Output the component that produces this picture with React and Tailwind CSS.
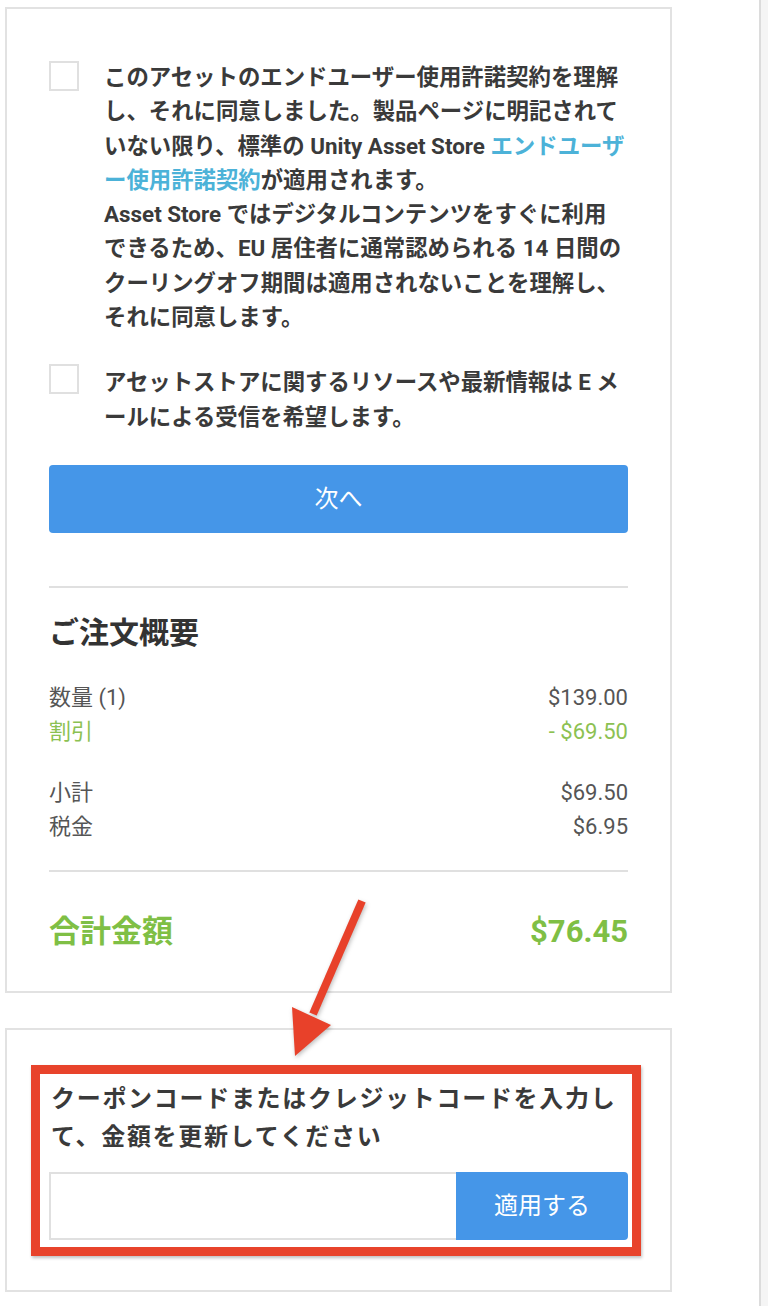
import React from 'react';

const font = { fontFamily: 'Roboto, "Noto Sans CJK JP", sans-serif' };

const Checkbox = () => (
  <div className="w-[30px] h-[30px] shrink-0 border-2 border-[#e0e0e0] bg-white mt-[1px]" />
);

const SummaryRow = ({ label, value, green }) => (
  <div
    className={`flex justify-between text-[22px] leading-[34px] ${
      green ? 'text-[#8cc152]' : 'text-[#555555]'
    }`}
  >
    <span>{label}</span>
    <span>{value}</span>
  </div>
);

const Arrow = () => (
  <svg
    className="absolute top-0 left-0 pointer-events-none"
    width="768"
    height="1306"
    viewBox="0 0 768 1306"
    style={{ filter: 'drop-shadow(1px 2px 2px rgba(0,0,0,0.25))' }}
  >
    <line x1="362" y1="901" x2="313" y2="1014" stroke="#e8412a" strokeWidth="8" />
    <polygon points="292,1007 331,1025 295,1056" fill="#e8412a" />
  </svg>
);

export default function App() {
  return (
    <div className="relative flex h-[1306px] overflow-hidden bg-white text-[#3a3a3a]" style={font}>
      {/* main column */}
      <div className="w-[759px] shrink-0 pt-[7px] pl-[5px]">
        {/* checkout card */}
        <div className="w-[667px] border-2 border-[#e2e2e2] bg-white px-[42px] pt-[51px] pb-[39px]">
          <div className="flex gap-[25px]">
            <Checkbox />
            <p className="text-[22.4px] leading-[34.3px] font-bold whitespace-nowrap">
              このアセットのエンドユーザー使用許諾契約を理解
              <br />
              し、それに同意しました。製品ページに明記されて
              <br />
              いない限り、標準の Unity Asset Store{' '}
              <span className="text-[#4cb2d8]">エンドユーザ</span>
              <br />
              <span className="text-[#4cb2d8]">ー使用許諾契約</span>が適用されます。
              <br />
              Asset Store ではデジタルコンテンツをすぐに利用
              <br />
              できるため、EU 居住者に通常認められる 14 日間の
              <br />
              クーリングオフ期間は適用されないことを理解し、
              <br />
              それに同意します。
            </p>
          </div>

          <div className="flex gap-[25px] mt-[31px]">
            <div className="-mt-[2px]">
              <Checkbox />
            </div>
            <p className="text-[22.4px] leading-[34.3px] font-bold whitespace-nowrap">
              アセットストアに関するリソースや最新情報は E メ
              <br />
              ールによる受信を希望します。
            </p>
          </div>

          <button className="mt-[31px] w-full h-[68px] rounded-[4px] bg-[#4596e8] text-white text-[24px] font-normal">
            次へ
          </button>

          <div className="mt-[53px] h-[2px] bg-[#e0e0e0]" />

          <h2 className="mt-[25px] text-[30px] leading-[40px] font-bold text-[#333333]">ご注文概要</h2>

          <div className="mt-[28px]">
            <SummaryRow label="数量 (1)" value="$139.00" />
            <SummaryRow label="割引" value="- $69.50" green />
          </div>
          <div className="mt-[27px]">
            <SummaryRow label="小計" value="$69.50" />
            <SummaryRow label="税金" value="$6.95" />
          </div>

          <div className="mt-[26px] h-[2px] bg-[#e0e0e0]" />

          <div className="mt-[40px] flex justify-between items-center text-[31px] leading-[40px] font-bold text-[#7fbf45]">
            <span>合計金額</span>
            <span>$76.45</span>
          </div>
        </div>

        {/* coupon card */}
        <div className="mt-[35px] w-[667px] border-2 border-[#e2e2e2] bg-white pl-[24px] pr-[29px] pt-[35px] pb-[34px]">
          <div className="border-[9px] border-[#e8432b] pl-[9px] pr-[4px] pt-[6px] pb-[7px] shadow-[1px_2px_3px_rgba(0,0,0,0.25)]">
            <p className="text-[24px] leading-[38px] font-bold tracking-[1.7px] whitespace-nowrap pl-[2px]">
              クーポンコードまたはクレジットコードを入力し
              <br />
              て、金額を更新してください
            </p>
            <div className="mt-[16px] flex h-[68px]">
              <div className="flex-1 border-2 border-r-0 border-[#e0e0e0] bg-white" />
              <button className="w-[172px] rounded-r-[4px] bg-[#4596e8] text-white text-[24px] font-normal">
                適用する
              </button>
            </div>
          </div>
        </div>
      </div>

      {/* side strip */}
      <div className="flex-1 border-l-2 border-[#dcdcdc] bg-[#f5f5f5]" />

      <Arrow />
    </div>
  );
}
